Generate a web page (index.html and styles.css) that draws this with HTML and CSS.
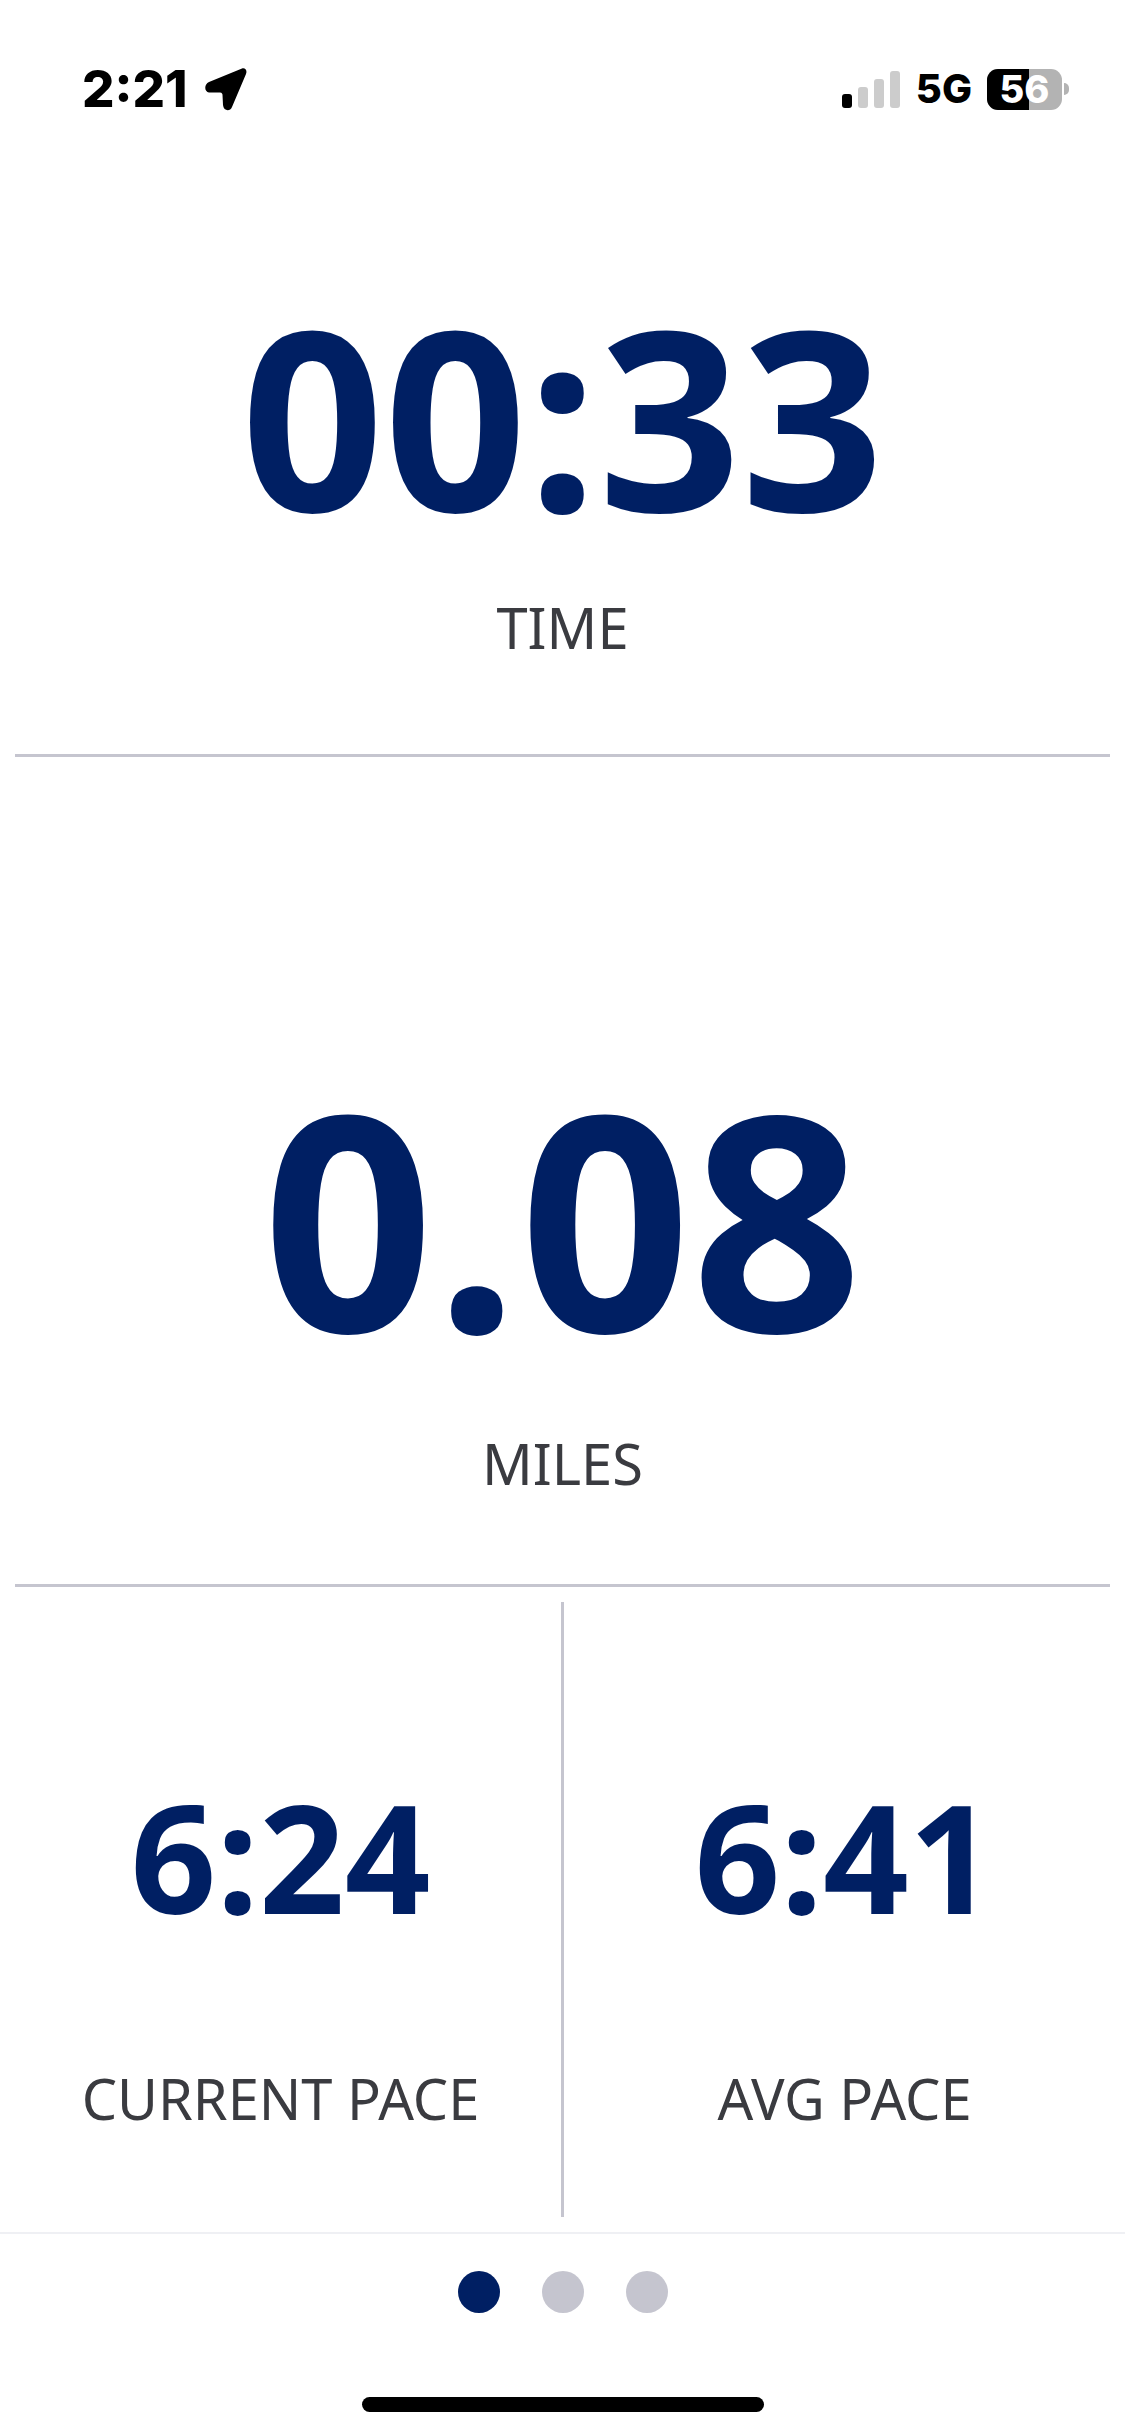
FILE: index.html
```html
<!DOCTYPE html>
<html lang="en">

<head>
    <meta charset="UTF-8">
    <meta name="viewport" content="width=device-width, initial-scale=1.0">
    <title>Run Stats</title>
    <link rel="stylesheet" href="styles.css">
</head>

<body>

    <header class="status-bar">
        <div class="status-left">
            <span class="clock">2:21</span>
            <svg class="location-icon" viewBox="0 0 42 43" width="42" height="43">
                <path d="M37 0.5 L4 14 C-1 16 -1 24 4 24.5 L15 24.5 C17 24.5 17.5 26 17.5 27 L18 37 C18.5 43 25 44 27 39 L41 6 C42.5 2 40 -0.5 37 0.5 Z" fill="#000" />
            </svg>
        </div>
        <div class="status-right">
            <div class="signal">
                <span class="signal-bar bar-1"></span>
                <span class="signal-bar bar-2"></span>
                <span class="signal-bar bar-3"></span>
                <span class="signal-bar bar-4"></span>
            </div>
            <span class="network">5G</span>
            <div class="battery">
                <div class="battery-body">
                    <span class="battery-level"></span>
                    <span class="battery-text">56</span>
                </div>
                <span class="battery-cap"></span>
            </div>
        </div>
    </header>

    <main class="stats">
        <section class="stat stat-time">
            <div class="value value-time">00:33</div>
            <div class="label">TIME</div>
        </section>
        <section class="stat stat-miles">
            <div class="value value-miles">0.08</div>
            <div class="label">MILES</div>
        </section>
        <section class="pace-row">
            <div class="stat pace-cell">
                <div class="value value-pace">6:24</div>
                <div class="label">CURRENT PACE</div>
            </div>
            <div class="pace-divider"></div>
            <div class="stat pace-cell">
                <div class="value value-pace">6:41</div>
                <div class="label">AVG PACE</div>
            </div>
        </section>
    </main>

    <footer class="pager">
        <span class="dot dot-active"></span>
        <span class="dot"></span>
        <span class="dot"></span>
    </footer>

    <div class="home-area">
        <span class="home-bar"></span>
    </div>

</body>

</html>
```

FILE: styles.css
```css
* {
    box-sizing: border-box;
}

body {
    margin: 0;
    padding: 0;
    width: 1125px;
    height: 2436px;
    background-color: #fff;
    font-family: "Open Sans", sans-serif;
    display: flex;
    flex-direction: column;
    overflow: hidden;
}

.status-bar {
    height: 135px;
    padding: 43px 56px 0 82px;
    display: flex;
    justify-content: space-between;
    align-items: center;
    flex-shrink: 0;
}

.status-left {
    display: flex;
    align-items: center;
    gap: 17px;
}

.clock {
    font-family: Inter, sans-serif;
    font-weight: 800;
    font-size: 51px;
    line-height: 50px;
    color: #000;
}

.status-right {
    display: flex;
    align-items: center;
}

.signal {
    display: flex;
    align-items: flex-end;
    gap: 6px;
    height: 37px;
    margin-right: 16px;
}

.signal-bar {
    width: 10px;
    background-color: #ccc;
    border-radius: 3px;
}

.bar-1 {
    height: 14px;
    background-color: #000;
}

.bar-2 {
    height: 21px;
}

.bar-3 {
    height: 29px;
}

.bar-4 {
    height: 37px;
}

.network {
    font-family: Inter, sans-serif;
    font-weight: 800;
    font-size: 40px;
    line-height: 40px;
    color: #000;
    margin-right: 15px;
}

.battery {
    display: flex;
    align-items: center;
}

.battery-body {
    position: relative;
    width: 75px;
    height: 41px;
    border-radius: 11px;
    background-color: #b3b3b3;
    display: flex;
    align-items: center;
    justify-content: center;
}

.battery-level {
    position: absolute;
    left: 0;
    top: 0;
    bottom: 0;
    width: 42px;
    background-color: #000;
    border-radius: 11px 0 0 11px;
}

.battery-text {
    position: relative;
    font-family: Inter, sans-serif;
    font-weight: 800;
    font-size: 38px;
    line-height: 40px;
    color: #fff;
}

.battery-cap {
    width: 5px;
    height: 12px;
    margin-left: 2px;
    background-color: #b3b3b3;
    border-radius: 0 5px 5px 0;
}

.stats {
    flex: 1;
    display: flex;
    flex-direction: column;
}

.stat {
    display: flex;
    flex-direction: column;
    align-items: center;
}

.stat-time {
    height: 622px;
    margin: 0 15px;
    padding-top: 130px;
    border-bottom: 3px solid #c5c5cf;
}

.stat-miles {
    height: 830px;
    margin: 0 15px;
    padding-top: 289px;
    border-bottom: 3px solid #c5c5cf;
}

.value {
    color: #001f63;
    font-weight: 700;
}

.value-time {
    font-size: 250px;
    line-height: 300px;
}

.value-miles {
    font-size: 300px;
    line-height: 340px;
}

.value-pace {
    font-size: 150px;
    line-height: 180px;
}

.label {
    font-family: "Noto Sans", sans-serif;
    color: #3a3b40;
    font-size: 56px;
    line-height: 70px;
}

.stat-time .label {
    margin-top: 27px;
}

.stat-miles .label {
    margin-top: 42px;
}

.pace-row {
    display: flex;
    height: 630px;
    padding-top: 15px;
}

.pace-cell {
    flex: 1;
    padding-top: 164px;
}

.pace-cell .label {
    margin-top: 117px;
}

.pace-divider {
    width: 3px;
    height: 615px;
    background-color: #c5c5cf;
}

.pager {
    height: 120px;
    padding-bottom: 2px;
    border-top: 2px solid #eff0f4;
    display: flex;
    justify-content: center;
    align-items: center;
    gap: 42px;
    flex-shrink: 0;
}

.dot {
    width: 42px;
    height: 42px;
    border-radius: 50%;
    background-color: #c5c5cf;
}

.dot-active {
    background-color: #001f63;
}

.home-area {
    height: 84px;
    display: flex;
    justify-content: center;
    flex-shrink: 0;
    padding-top: 45px;
}

.home-bar {
    width: 402px;
    height: 15px;
    background-color: #000;
    border-radius: 8px;
}
```
